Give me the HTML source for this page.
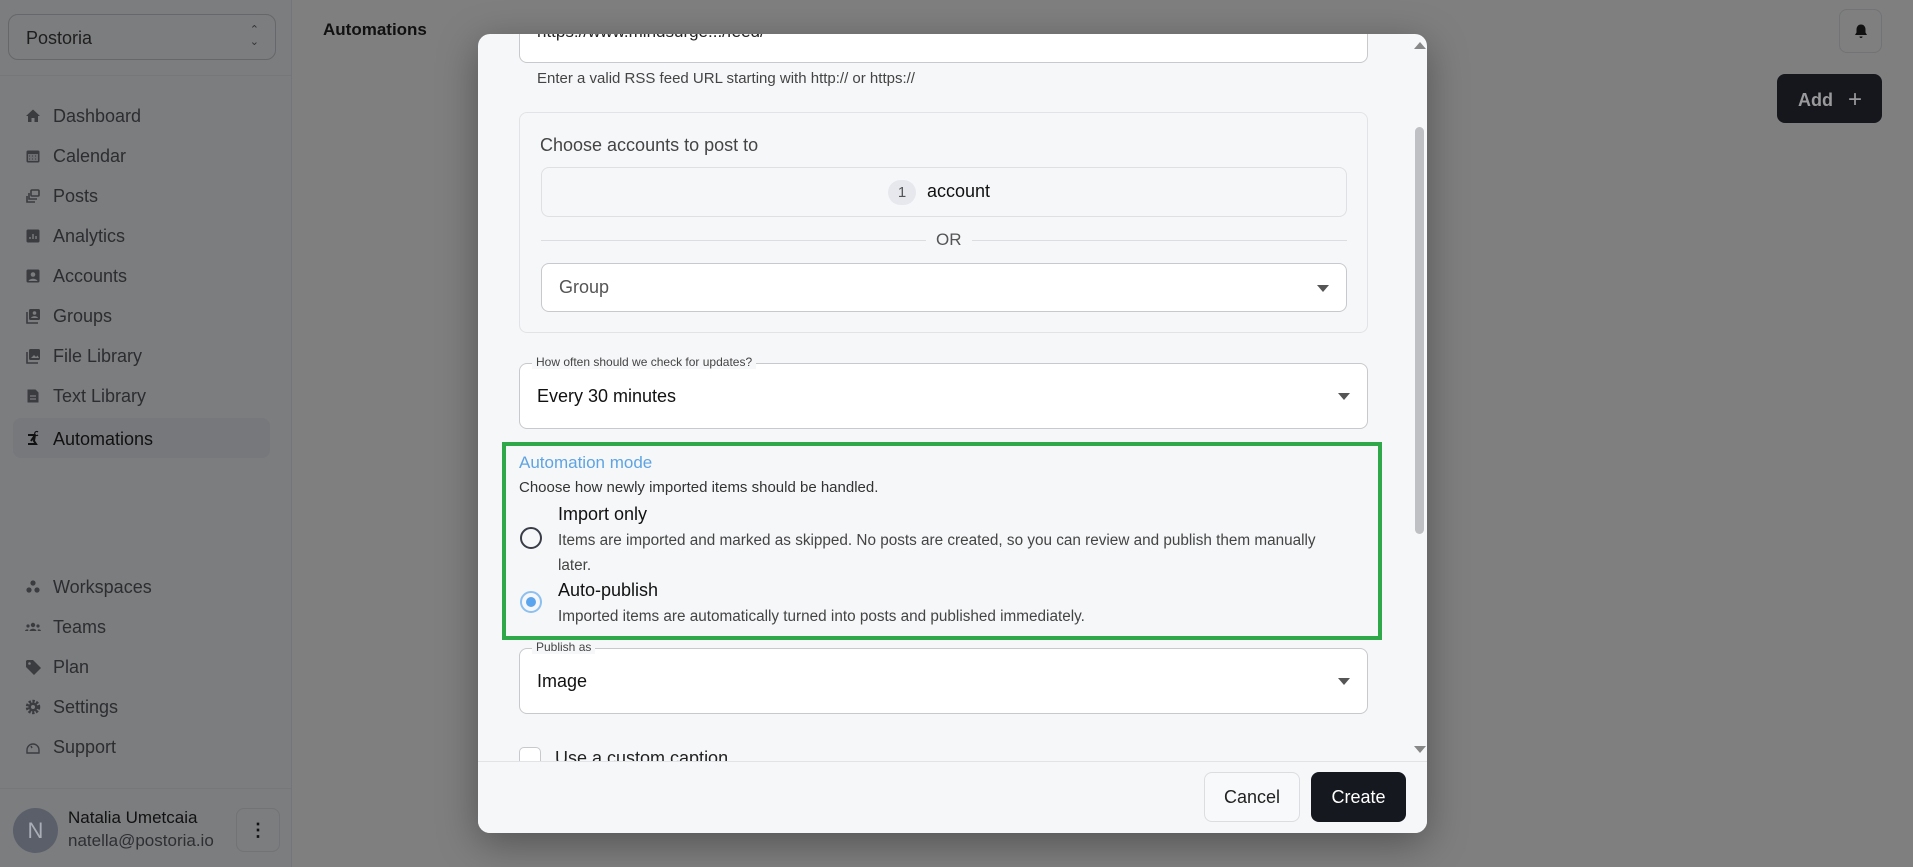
<!DOCTYPE html>
<html><head><meta charset="utf-8"><style>
*{box-sizing:border-box;margin:0;padding:0}
body{width:1913px;height:867px;overflow:hidden;position:relative;background:#7f7f7f;font-family:"Liberation Sans",sans-serif;color:#222}
.side{position:absolute;left:0;top:0;width:292px;height:867px;background:#7c7d7f;border-right:1px solid #747578}
.sel{position:absolute;left:8px;top:14px;width:268px;height:46px;border:1px solid #66676a;border-radius:10px;font-size:18px;color:#1e1e1e;padding:13px 17px}
.sel .ud{position:absolute;right:16px;top:9px;font-size:11px;line-height:12px;color:#333}
.hr{position:absolute;left:0;width:291px;height:1px;background:#76777a}
.nav{position:absolute;left:13px;width:257px;height:40px;font-size:18px;color:#2c2d30;padding:10px 0 0 40px}
.nav.act{background:#77787b;border-radius:8px;color:#111}
.ic{position:absolute;left:12px;top:12px;width:16px;height:16px}
.main-t{position:absolute;left:323px;top:20px;font-size:17px;font-weight:bold;color:#111}
.bell{position:absolute;left:1839px;top:9px;width:43px;height:44px;border:1px solid #727376;border-radius:8px}
.add{position:absolute;left:1777px;top:74px;width:105px;height:49px;background:#15171c;border-radius:8px;color:#9a9a9c;font-size:18px;font-weight:bold;padding:11px 0 0 21px}
.modal{position:absolute;left:478px;top:34px;width:949px;height:799px;background:#f6f7f9;border-radius:12px;overflow:hidden;box-shadow:0 10px 40px rgba(0,0,0,.35)}
.a{position:absolute}
.box{position:absolute;background:#fff;border:1px solid #c8c9cc;border-radius:8px}
.tri{position:absolute;width:0;height:0;border-left:6px solid transparent;border-right:6px solid transparent;border-top:7px solid #555}
.lbl{position:absolute;font-size:12px;color:#444;background:#f6f7f9;padding:0 4px}
</style></head><body>
<div class="side">
 <div class="sel">Postoria<div class="ud">⌃<br>⌄</div></div>
 <div class="hr" style="top:75px"></div>
 <div class="nav" style="top:96px"><svg class="ic" viewBox="0 0 16 16"><path d="M1 8 8 1.5 15 8h-2v6H9.5v-4h-3v4H3V8z" fill="#3b3c40"/></svg>Dashboard</div>
 <div class="nav" style="top:136px"><svg class="ic" viewBox="0 0 16 16"><rect x="1.5" y="2.5" width="13" height="12" rx="1.5" fill="#3b3c40"/><rect x="3" y="6" width="10" height="7" fill="#6d6e71"/><path d="M4 8h1M7 8h1M10 8h1M4 11h1M7 11h1M10 11h1" stroke="#3b3c40"/></svg>Calendar</div>
 <div class="nav" style="top:176px"><svg class="ic" viewBox="0 0 16 16" fill="none" stroke="#3b3c40" stroke-width="1.6"><rect x="6" y="2" width="8" height="6" rx="1"/><path d="M4 5v6h8M2 8v6h8"/></svg>Posts</div>
 <div class="nav" style="top:216px"><svg class="ic" viewBox="0 0 16 16"><rect x="1.5" y="1.5" width="13" height="13" rx="1.5" fill="#3b3c40"/><path d="M5 11V9M8 11V6M11 11V8" stroke="#7c7d7f" stroke-width="1.4"/></svg>Analytics</div>
 <div class="nav" style="top:256px"><svg class="ic" viewBox="0 0 16 16"><rect x="1.5" y="1.5" width="13" height="13" rx="1.5" fill="#3b3c40"/><circle cx="8" cy="6.5" r="2.3" fill="#7c7d7f"/><path d="M3.5 13c1-3 8-3 9 0z" fill="#7c7d7f"/></svg>Accounts</div>
 <div class="nav" style="top:296px"><svg class="ic" viewBox="0 0 16 16"><rect x="4" y="1" width="11" height="11" rx="1.5" fill="#3b3c40"/><path d="M2 4v11h11" fill="none" stroke="#3b3c40" stroke-width="1.6"/><circle cx="9.5" cy="5" r="1.8" fill="#7c7d7f"/><path d="M6 10c1-2.5 6-2.5 7 0z" fill="#7c7d7f"/></svg>Groups</div>
 <div class="nav" style="top:336px"><svg class="ic" viewBox="0 0 16 16"><rect x="4" y="1" width="11" height="11" rx="1.5" fill="#3b3c40"/><path d="M2 4v11h11" fill="none" stroke="#3b3c40" stroke-width="1.6"/><path d="M6 10l3-3 2 2 1.5-1.5L14 10z" fill="#7c7d7f"/></svg>File Library</div>
 <div class="nav" style="top:376px"><svg class="ic" viewBox="0 0 16 16"><path d="M2.5 1.5h8l3 3v10h-11z" fill="#3b3c40"/><path d="M5 8h6M5 11h6" stroke="#7c7d7f" stroke-width="1.3"/></svg>Text Library</div>
 <div class="nav act" style="top:418px;padding-top:11px"><svg class="ic" viewBox="0 0 16 16"><path d="M3 14h8l-2-3 1-6M3 5l7 0M6 11l4-6" fill="none" stroke="#111" stroke-width="2"/><path d="M13 2a2 2 0 1 0 0 3" fill="none" stroke="#111" stroke-width="1.2"/></svg>Automations</div>
 <div class="nav" style="top:567px"><svg class="ic" viewBox="0 0 16 16" fill="#3b3c40"><circle cx="8" cy="4" r="2.6"/><circle cx="4" cy="11" r="2.6"/><circle cx="12" cy="11" r="2.6"/></svg>Workspaces</div>
 <div class="nav" style="top:607px"><svg class="ic" viewBox="0 0 16 16" fill="#3b3c40"><circle cx="8" cy="6" r="2.2"/><circle cx="3" cy="7" r="1.6"/><circle cx="13" cy="7" r="1.6"/><path d="M4.5 12c.5-3 6.5-3 7 0zM0 12c.3-2 3-2 3.5-1l-.5 1zM16 12c-.3-2-3-2-3.5-1l.5 1z"/></svg>Teams</div>
 <div class="nav" style="top:647px"><svg class="ic" viewBox="0 0 16 16"><path d="M1 2v6l8 8 7-7-8-8H2z" fill="#3b3c40"/><circle cx="4.5" cy="4.5" r="1.3" fill="#7c7d7f"/></svg>Plan</div>
 <div class="nav" style="top:687px"><svg class="ic" viewBox="0 0 16 16"><circle cx="8" cy="8" r="5.5" fill="none" stroke="#3b3c40" stroke-width="3.5" stroke-dasharray="2.2 1.4"/><circle cx="8" cy="8" r="4.5" fill="#3b3c40"/><circle cx="8" cy="8" r="2" fill="#7c7d7f"/></svg>Settings</div>
 <div class="nav" style="top:727px"><svg class="ic" viewBox="0 0 16 16" fill="none" stroke="#3b3c40" stroke-width="1.4"><path d="M2 11a6 6 0 1 1 12 0v3H2z"/><path d="M6 7l1 2"/></svg>Support</div>
 <div class="hr" style="top:788px"></div>
 <div class="a" style="left:13px;top:808px;width:45px;height:45px;border-radius:50%;background:#5a5f6a;color:#a9adb5;font-size:22px;text-align:center;line-height:45px">N</div>
 <div class="a" style="left:68px;top:808px;font-size:17px;color:#111">Natalia Umetcaia</div>
 <div class="a" style="left:68px;top:831px;font-size:17px;color:#2e2f33">natella@postoria.io</div>
 <div class="a" style="left:236px;top:808px;width:44px;height:44px;border:1px solid #727376;border-radius:8px;text-align:center;font-size:18px;font-weight:bold;line-height:42px;color:#111">⋮</div>
</div>
<div class="main-t">Automations</div>
<div class="bell"><svg viewBox="0 0 16 16" width="16" height="16" style="position:absolute;left:13px;top:13px"><path d="M8 1.5c-3 0-4.5 2.5-4.5 5v3L2 12h12l-1.5-2.5v-3C12.5 4 11 1.5 8 1.5z M6.5 13.5h3a1.5 1.5 0 0 1-3 0z" fill="#111"/></svg></div>
<div class="add">Add <span style="font-weight:normal;font-size:24px;margin-left:10px;position:relative;top:1px">+</span></div>

<div class="modal">
 <div class="box" style="left:41px;top:-20px;width:849px;height:49px;overflow:hidden"><div style="position:absolute;left:17px;top:7px;font-size:17px;color:#222">https://www.mindsurge.../feed/</div></div>
 <div class="a" style="left:59px;top:36px;font-size:15px;color:#444">Enter a valid RSS feed URL starting with http:// or https://</div>
 <div class="a" style="left:41px;top:78px;width:849px;height:221px;border:1px solid #e2e3e6;border-radius:8px;background:#f6f7f9"></div>
 <div class="a" style="left:62px;top:101px;font-size:18px;color:#444">Choose accounts to post to</div>
 <div class="a" style="left:63px;top:133px;width:806px;height:50px;border:1px solid #dfe0e3;border-radius:8px;background:#f6f7f9"></div>
 <div class="a" style="left:410px;top:146px;width:28px;height:25px;border-radius:13px;background:#e6e8ee;font-size:15px;color:#555;text-align:center;line-height:25px">1</div>
 <div class="a" style="left:449px;top:147px;font-size:18px;color:#111">account</div>
 <div class="a" style="left:63px;top:206px;width:806px;height:1px;background:#dcdde0"></div>
 <div class="a" style="left:448px;top:196px;padding:0 10px;background:#f6f7f9;font-size:17px;color:#555">OR</div>
 <div class="box" style="left:63px;top:229px;width:806px;height:49px"><div style="position:absolute;left:17px;top:13px;font-size:18px;color:#555">Group</div><div class="tri" style="right:17px;top:21px"></div></div>
 <div class="box" style="left:41px;top:329px;width:849px;height:66px"><div style="position:absolute;left:17px;top:22px;font-size:18px;color:#111">Every 30 minutes</div><div class="tri" style="right:17px;top:29px"></div></div>
 <div class="lbl" style="left:54px;top:321px">How often should we check for updates?</div>
 <div class="a" style="left:24px;top:408px;width:880px;height:198px;border:4px solid #2fa84a"></div>
 <div class="a" style="left:41px;top:419px;font-size:17px;color:#5fa4e2">Automation mode</div>
 <div class="a" style="left:41px;top:445px;font-size:15px;color:#333">Choose how newly imported items should be handled.</div>
 <div class="a" style="left:42px;top:493px;width:22px;height:22px;border:2.5px solid #3a3d48;border-radius:50%"></div>
 <div class="a" style="left:80px;top:470px;font-size:18px;color:#111">Import only</div>
 <div class="a" style="left:80px;top:494px;width:820px;font-size:15.3px;color:#444;line-height:25px">Items are imported and marked as skipped. No posts are created, so you can review and publish them manually<br>later.</div>
 <div class="a" style="left:42px;top:557px;width:22px;height:22px;border:2.5px solid #8cc0f0;border-radius:50%"><div style="position:absolute;left:3.5px;top:3.5px;width:10px;height:10px;border-radius:50%;background:#5aa5ee"></div></div>
 <div class="a" style="left:80px;top:546px;font-size:18px;color:#111">Auto-publish</div>
 <div class="a" style="left:80px;top:570px;font-size:15.3px;color:#444;line-height:25px">Imported items are automatically turned into posts and published immediately.</div>
 <div class="box" style="left:41px;top:614px;width:849px;height:66px"><div style="position:absolute;left:17px;top:22px;font-size:18px;color:#111">Image</div><div class="tri" style="right:17px;top:29px"></div></div>
 <div class="lbl" style="left:54px;top:606px">Publish as</div>
 <div class="a" style="left:41px;top:713px;width:22px;height:22px;border:1px solid #c8c9cc;border-radius:5px;background:#fff"></div>
 <div class="a" style="left:77px;top:714px;font-size:18px;color:#222">Use a custom caption</div>
 <div class="a" style="left:937px;top:93px;width:9px;height:407px;background:#bfc0c3;border-radius:5px"></div>
 <div class="a" style="left:936px;top:8px;width:0;height:0;border-left:6px solid transparent;border-right:6px solid transparent;border-bottom:7px solid #888"></div>
 <div class="a" style="left:936px;top:712px;width:0;height:0;border-left:6px solid transparent;border-right:6px solid transparent;border-top:7px solid #888"></div>
 <div class="a" style="left:0;top:727px;width:949px;height:72px;background:#f6f7f9;border-top:1px solid #e2e3e6"></div>
 <div class="a" style="left:726px;top:738px;width:96px;height:50px;border:1px solid #dcdde0;border-radius:8px;background:#f8f9fa;font-size:18px;color:#222;text-align:center;line-height:48px">Cancel</div>
 <div class="a" style="left:833px;top:738px;width:95px;height:50px;border-radius:8px;background:#15181f;font-size:18px;color:#fff;text-align:center;line-height:50px">Create</div>
</div>
</body></html>
